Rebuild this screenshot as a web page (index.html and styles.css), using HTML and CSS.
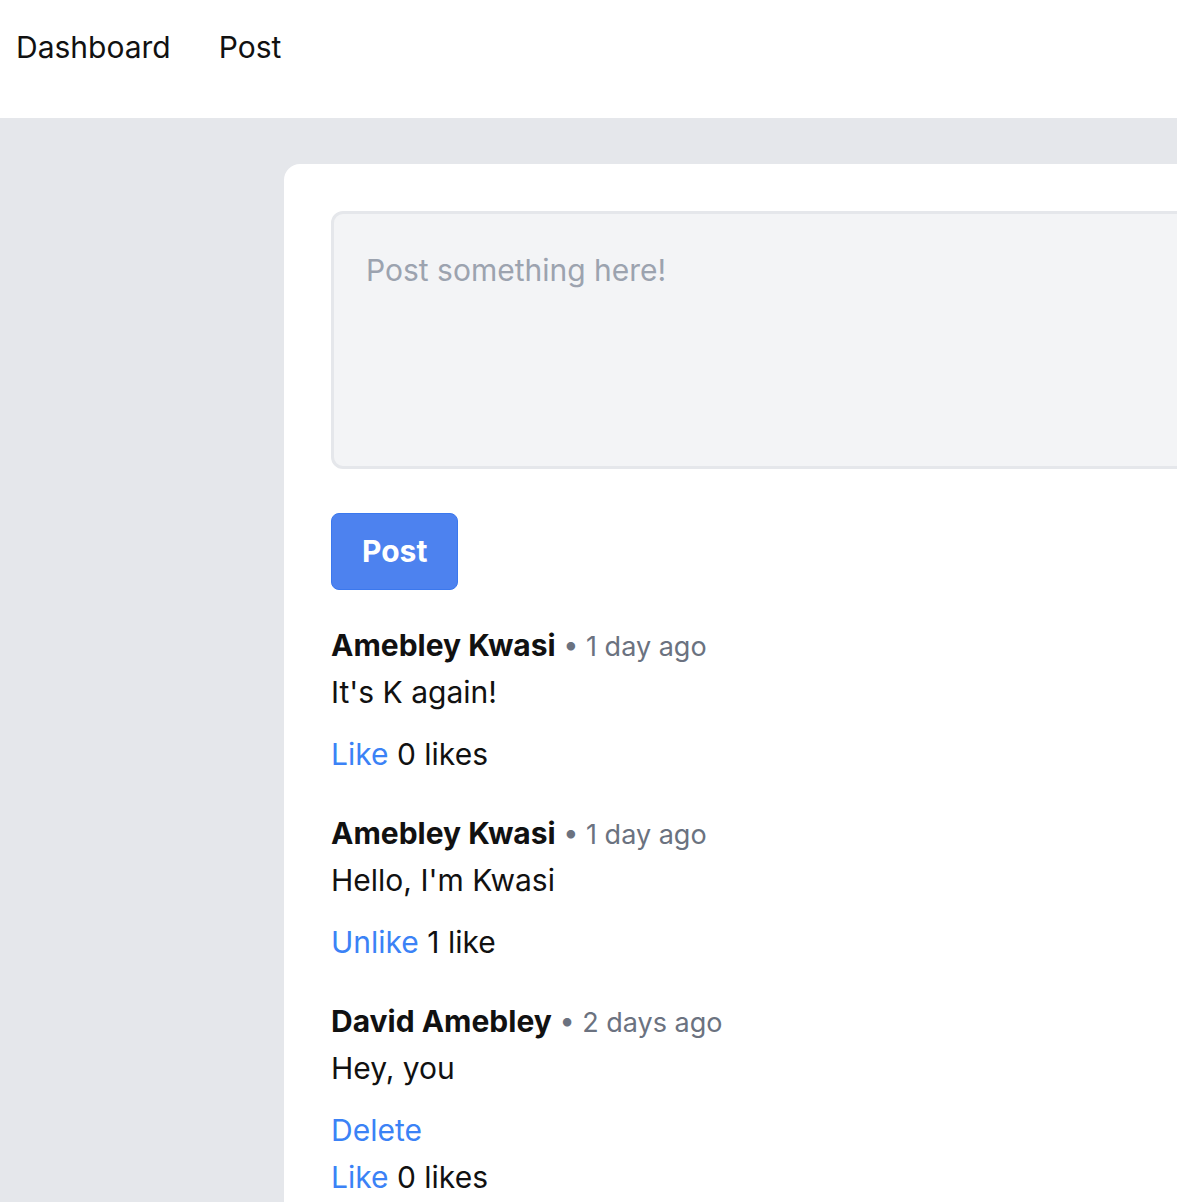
FILE: index.html
```html
<!DOCTYPE html>
<html lang="en">
<head>
<meta charset="utf-8">
<title>Dashboard</title>
<link rel="stylesheet" href="styles.css">
</head>
<body>
<nav class="topnav">
  <a class="navlink" href="#">Dashboard</a>
  <a class="navlink" href="#">Post</a>
</nav>
<main class="page">
  <section class="card">
    <form class="composer">
      <textarea class="composer-input" placeholder="Post something here!"></textarea>
      <button type="button" class="btn-post">Post</button>
    </form>
    <div class="feed">
      <article class="post">
        <div class="post-head"><span class="author">Amebley Kwasi</span><span class="meta"> • 1 day ago</span></div>
        <p class="post-body">It's K again!</p>
        <div class="actions">
          <div class="action-row"><a class="link" href="#">Like</a> <span>0 likes</span></div>
        </div>
      </article>
      <article class="post">
        <div class="post-head"><span class="author">Amebley Kwasi</span><span class="meta"> • 1 day ago</span></div>
        <p class="post-body">Hello, I'm Kwasi</p>
        <div class="actions">
          <div class="action-row"><a class="link" href="#">Unlike</a> <span>1 like</span></div>
        </div>
      </article>
      <article class="post">
        <div class="post-head"><span class="author">David Amebley</span><span class="meta"> • 2 days ago</span></div>
        <p class="post-body">Hey, you</p>
        <div class="actions">
          <div class="action-row"><a class="link" href="#">Delete</a></div>
          <div class="action-row"><a class="link" href="#">Like</a> <span>0 likes</span></div>
        </div>
      </article>
    </div>
  </section>
</main>
</body>
</html>
```

FILE: styles.css
```css
* { box-sizing: border-box; }
html, body { margin: 0; padding: 0; }
body {
  font-family: Inter, "Noto Sans", sans-serif;
  font-size: 30px;
  line-height: 47px;
  color: #111;
  background: #e5e7eb;
  overflow: hidden;
  width: 1177px;
  height: 1202px;
}
.topnav {
  background: #fff;
  height: 118px;
  padding: 24px 16px 0;
  display: flex;
  gap: 48px;
}
.navlink {
  color: #111;
  text-decoration: none;
}
.page {
  padding: 46px 0 0 284px;
}
.card {
  background: #fff;
  border-radius: 16px 0 0 0;
  width: 1400px;
  min-height: 1100px;
  padding: 47px;
}
.composer {
  display: flex;
  flex-direction: column;
  align-items: flex-start;
}
.composer-input {
  display: block;
  width: 100%;
  height: 258px;
  background: #f3f4f6;
  border: 3px solid #e5e7eb;
  border-radius: 12px;
  padding: 33px 32px;
  font: inherit;
  color: #111;
  resize: none;
  outline: none;
}
.composer-input::placeholder { color: #9ca3af; }
.btn-post {
  margin-top: 44px;
  height: 77px;
  padding: 0 30px;
  background: #4d82ef;
  color: #fff;
  border: 1px solid #3b78ee;
  border-radius: 8px;
  font: inherit;
  font-weight: 700;
}
.feed {
  margin-top: 32px;
  display: flex;
  flex-direction: column;
  gap: 32px;
}
.post-head { white-space: nowrap; }
.author { font-weight: 700; }
.meta {
  color: #6b7280;
  font-size: 27px;
  line-height: 1;
}
.post-body { margin: 0; }
.actions { margin-top: 15px; }
.link {
  color: #3b82f6;
  text-decoration: none;
}
```
